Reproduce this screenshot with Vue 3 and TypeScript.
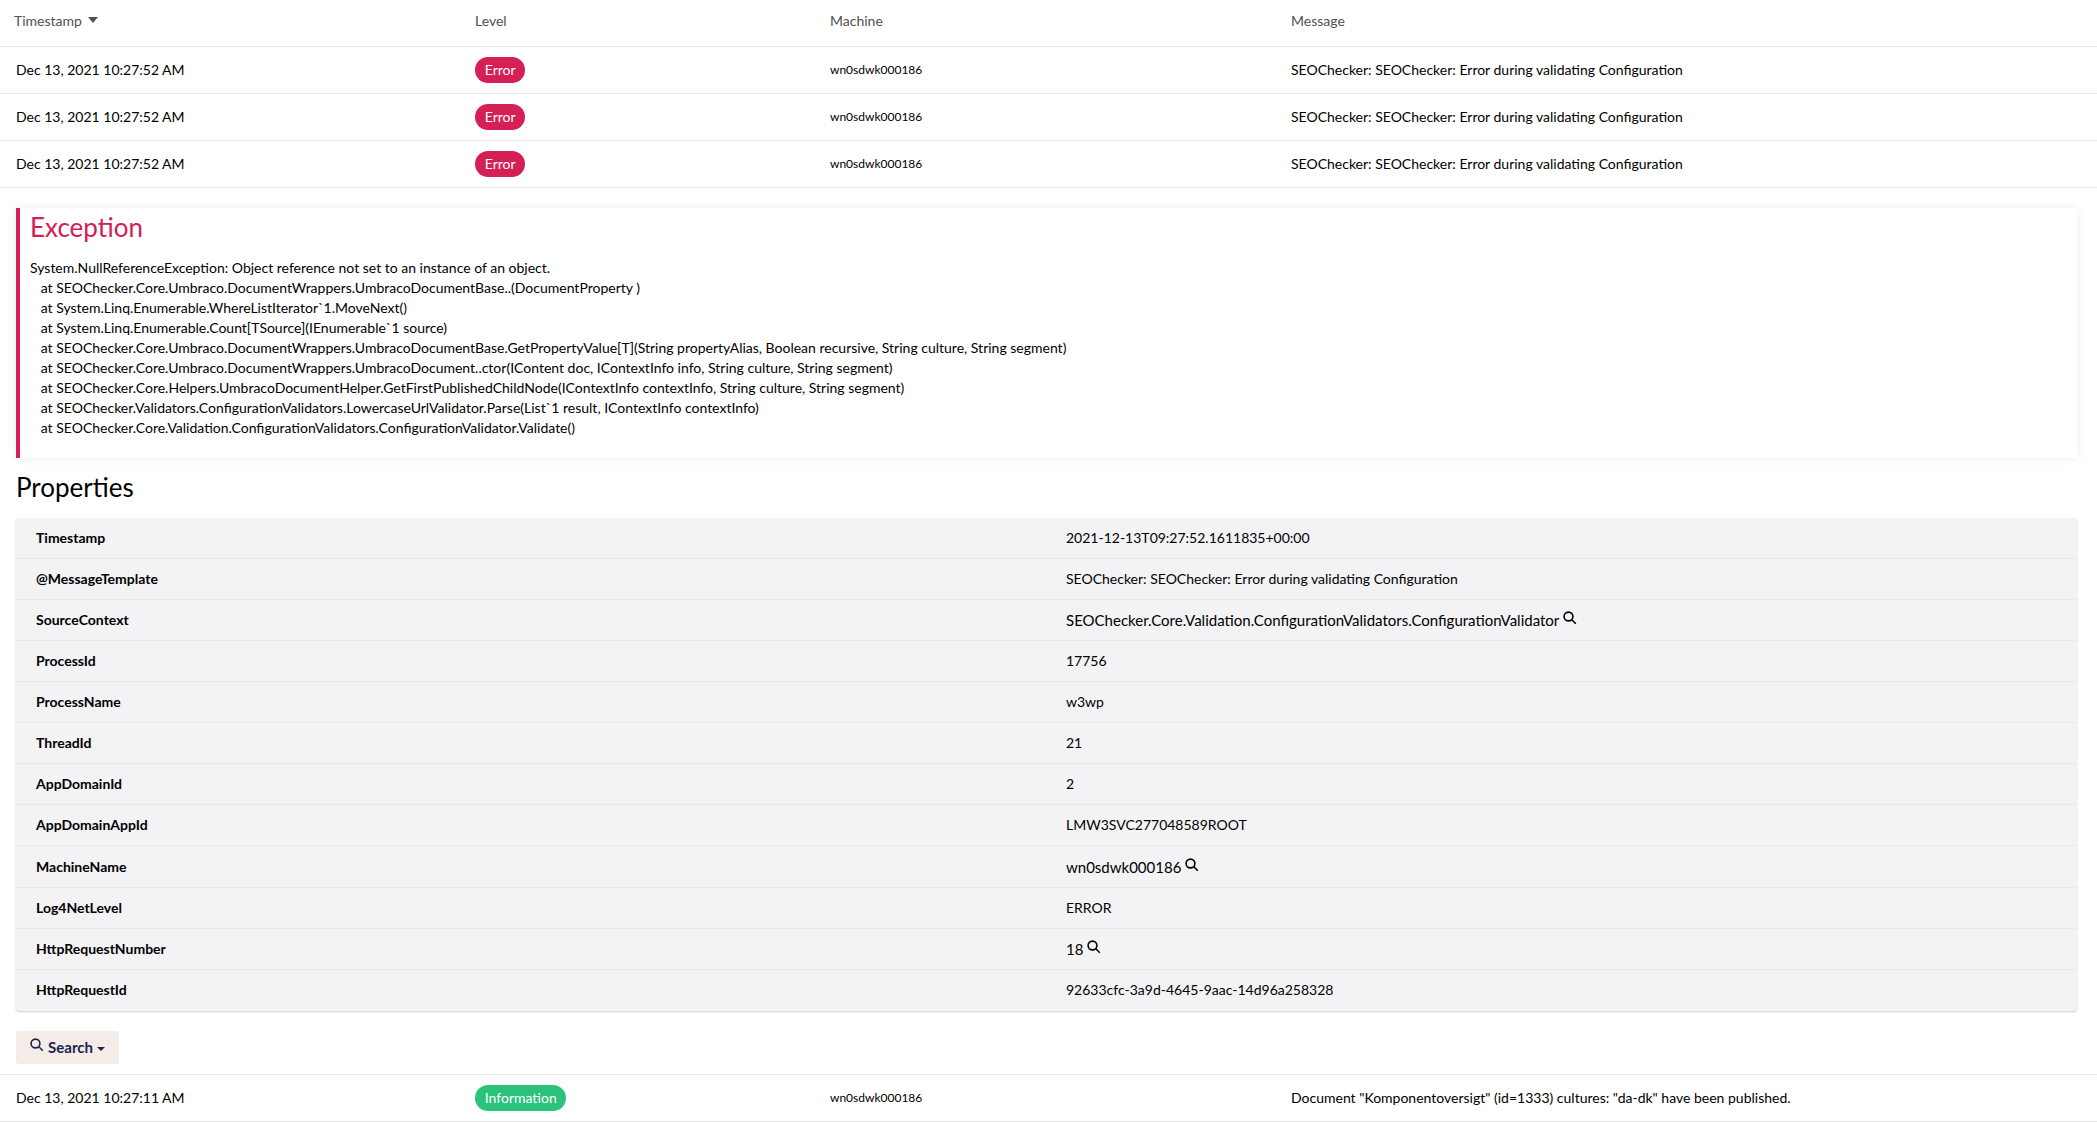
<script setup lang="ts">
interface LogRow { time: string; level: string; machine: string; message: string }
interface Prop { key: string; value: string; search?: boolean }
const msg = 'SEOChecker: SEOChecker: Error during validating Configuration'
const errors: LogRow[] = [1, 2, 3].map(() => ({ time: 'Dec 13, 2021 10:27:52 AM', level: 'Error', machine: 'wn0sdwk000186', message: msg }))
const info: LogRow = { time: 'Dec 13, 2021 10:27:11 AM', level: 'Information', machine: 'wn0sdwk000186', message: 'Document "Komponentoversigt" (id=1333) cultures: "da-dk" have been published.' }
const exception = `System.NullReferenceException: Object reference not set to an instance of an object.
   at SEOChecker.Core.Umbraco.DocumentWrappers.UmbracoDocumentBase..(DocumentProperty )
   at System.Linq.Enumerable.WhereListIterator\`1.MoveNext()
   at System.Linq.Enumerable.Count[TSource](IEnumerable\`1 source)
   at SEOChecker.Core.Umbraco.DocumentWrappers.UmbracoDocumentBase.GetPropertyValue[T](String propertyAlias, Boolean recursive, String culture, String segment)
   at SEOChecker.Core.Umbraco.DocumentWrappers.UmbracoDocument..ctor(IContent doc, IContextInfo info, String culture, String segment)
   at SEOChecker.Core.Helpers.UmbracoDocumentHelper.GetFirstPublishedChildNode(IContextInfo contextInfo, String culture, String segment)
   at SEOChecker.Validators.ConfigurationValidators.LowercaseUrlValidator.Parse(List\`1 result, IContextInfo contextInfo)
   at SEOChecker.Core.Validation.ConfigurationValidators.ConfigurationValidator.Validate()`
const props: Prop[] = [
  { key: 'Timestamp', value: '2021-12-13T09:27:52.1611835+00:00' },
  { key: '@MessageTemplate', value: msg },
  { key: 'SourceContext', value: 'SEOChecker.Core.Validation.ConfigurationValidators.ConfigurationValidator', search: true },
  { key: 'ProcessId', value: '17756' },
  { key: 'ProcessName', value: 'w3wp' },
  { key: 'ThreadId', value: '21' },
  { key: 'AppDomainId', value: '2' },
  { key: 'AppDomainAppId', value: 'LMW3SVC277048589ROOT' },
  { key: 'MachineName', value: 'wn0sdwk000186', search: true },
  { key: 'Log4NetLevel', value: 'ERROR' },
  { key: 'HttpRequestNumber', value: '18', search: true },
  { key: 'HttpRequestId', value: '92633cfc-3a9d-4645-9aac-14d96a258328' },
]
</script>

<template>
  <div class="page">
    <div class="row head">
      <div class="first">Timestamp <span class="sort"></span></div>
      <div>Level</div>
      <div>Machine</div>
      <div>Message</div>
    </div>
    <div v-for="(r, i) in errors" :key="i" class="row">
      <div>{{ r.time }}</div>
      <div class="cell"><span class="badge err">{{ r.level }}</span></div>
      <div class="machine">{{ r.machine }}</div>
      <div>{{ r.message }}</div>
    </div>

    <section class="detail">
      <div class="card">
        <h3>Exception</h3>
        <pre>{{ exception }}</pre>
      </div>
      <h2>Properties</h2>
      <div class="props">
        <div v-for="p in props" :key="p.key" class="prop" :class="{ tall: p.key === 'MachineName' }">
          <div class="key">{{ p.key }}</div>
          <div :class="{ linked: p.search }">{{ p.value }}
            <svg v-if="p.search" class="mag" viewBox="0 0 14 14"><circle cx="5.5" cy="5.5" r="4.4" /><path d="M8.8 8.8 12.8 12.8" /></svg>
          </div>
        </div>
      </div>
      <button class="search">
        <svg class="mag btn" viewBox="0 0 14 14"><circle cx="5.5" cy="5.5" r="4.4" /><path d="M8.8 8.8 12.8 12.8" /></svg>
        Search <span class="caret"></span>
      </button>
    </section>

    <div class="row">
      <div>{{ info.time }}</div>
      <div class="cell"><span class="badge ok">{{ info.level }}</span></div>
      <div class="machine">{{ info.machine }}</div>
      <div>{{ info.message }}</div>
    </div>
  </div>
</template>

<style>
html, body { margin: 0; background: #fff; }
</style>

<style scoped>
.page {
  font-family: Lato, "Liberation Sans", sans-serif;
  font-size: 14px;
  line-height: 20px;
  color: #1b264f;
  height: 1124px;
  overflow: hidden;
  font-variant-ligatures: common-ligatures;
}
.row {
  display: grid;
  grid-template-columns: 459px 355px 461px 1fr;
  align-items: center;
  height: 46px;
  padding-left: 16px;
  border-bottom: 1px solid #e9e9eb;
  color: #000;
}
.cell { display: flex; }
.head { color: #515054; height: 41px; padding-bottom: 5px; }
.first { margin-left: -2px; }
.sort {
  display: inline-block;
  width: 0; height: 0;
  margin: 0 0 3px 3px;
  border-left: 5px solid transparent;
  border-right: 5px solid transparent;
  border-top: 6px solid #515054;
}
.machine { font-size: 12px; }
.badge {
  height: 26px;
  line-height: 26px;
  padding: 0 9.75px;
  border-radius: 13px;
  color: #fff;
  font-size: 14px;
}
.err { background: #d42054; }
.ok { background: #2bc37c; }
.detail { padding: 20px 20px 10px 16px; border-bottom: 1px solid #e9e9eb; }
.card {
  height: 250px;
  box-sizing: border-box;
  border-left: 4px solid #d42054;
  padding: 0 10px;
  box-shadow: 0 0 10px rgba(0,0,0,.08);
  background: #fff;
}
h3 {
  margin: 0;
  font-size: 26px;
  line-height: 38px;
  font-weight: 400;
  color: #d42054;
}
pre {
  margin: 12px 0 0;
  font: inherit;
  color: #000;
}
h2 {
  margin: 13px 0 14px;
  font-size: 26px;
  line-height: 33px;
  font-weight: 400;
  color: #000;
}
.props {
  background: #f3f3f5;
  box-shadow: 0 1px 2px rgba(0,0,0,.2);
  border-radius: 3px;
}
.prop {
  display: grid;
  grid-template-columns: 1030px 1fr;
  align-items: center;
  height: 40px;
  padding-left: 20px;
  border-bottom: 1px solid #e9e9eb;
  color: #000;
}
.prop.tall { height: 41px; }
.prop:last-child { border-bottom: 1px solid transparent; }
.key { font-weight: 700; }
.linked { font-size: 15px; }
.mag {
  width: 14px; height: 14px;
  fill: none;
  stroke: #000;
  stroke-width: 1.6;
  vertical-align: 1px;
}
.search {
  display: block;
  margin-top: 20px;
  width: 103px;
  height: 33px;
  padding: 0 0 2px;
  border: 0;
  border-radius: 3px;
  background: #f5ece9;
  color: #1b264f;
  font: inherit;
  font-size: 15px;
  font-weight: 700;
}
.btn { stroke: #1b264f; }
.caret {
  display: inline-block;
  width: 0; height: 0;
  vertical-align: 2px;
  border-left: 4px solid transparent;
  border-right: 4px solid transparent;
  border-top: 4px solid #1b264f;
}
</style>
